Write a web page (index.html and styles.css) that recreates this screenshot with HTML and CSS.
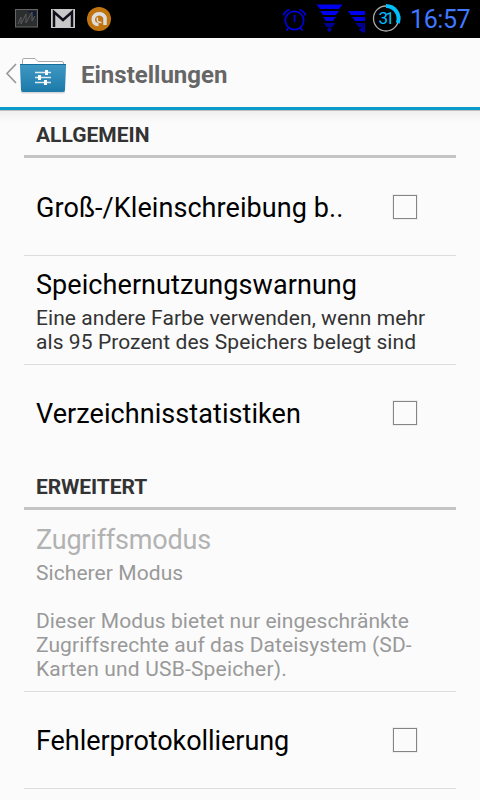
FILE: index.html
```html
<!DOCTYPE html>
<html lang="de">
<head>
<meta charset="utf-8">
<title>Einstellungen</title>
<link rel="stylesheet" href="styles.css">
</head>
<body>
<div class="status">
  <svg class="status-left" width="120" height="38" viewBox="0 0 120 38">
    <rect x="15.5" y="9.5" width="22" height="17.500" fill="#2b2e2e" stroke="#666"/>
    <path d="M28 11h8v8l-4-4z" fill="#141c35"/>
    <path d="M18 24l3-7v7l5-10v9l6-11v9l3-5" fill="none" stroke="#5a5a5a"/>
    <rect x="51" y="9" width="24" height="19" fill="#c8c8c8"/>
    <path d="M54 27V12l9 8 9-8v15" fill="none" stroke="#10101c" stroke-width="2.500"/>
    <circle cx="99" cy="19" r="12" fill="#c07410"/>
    <path d="M98.500 24.500C94 24.500 92.500 21 93.500 17.500c2-5 9.500-5 11.500 0v7.500" fill="none" stroke="#ddd" stroke-width="3.500"/>
    <path d="M97.500 17.500c-1 4 1 5 4 5" fill="none" stroke="#ddd" stroke-width="1.500"/>
  </svg>
  <svg class="status-icons" width="130" height="38" viewBox="275 0 130 38">
    <g fill="none" stroke="#0000e8" stroke-width="1.700">
      <circle cx="294.500" cy="20.500" r="9.200"/>
      <path d="M294.500 15v7M288.500 28l-2 2.500M300.500 28l2 2.500"/>
      <path d="M283.500 15.500q1-4 6-6M299.500 9.500q5 2 6 6"/>
    </g>
    <g fill="#0000f0">
      <path d="M316 4h27v1h-27z" fill="#000070"/>
      <path d="M317 5h25l-3 4h-19zM320 11h19l-3 4h-13z"/>
      <path d="M323 17h13l-3 4h-7z" fill="#0000e0"/>
      <path d="M323.500 23h12l-3 4h-6z" fill="#000090"/>
      <path d="M327 29.500l2.500-2.500 2.500 2.500-2.500 3z" fill="#0000a0"/>
      <path d="M348 11h17v4h-14z"/>
      <path d="M352 17h13v4h-10z" fill="#0000e0"/>
      <path d="M355.500 23h9.500v4h-6.500z" fill="#000090"/>
      <path d="M359 29.500l3-2.500h3v5.500h-3z" fill="#0000a0"/>
    </g>
    <circle cx="386" cy="18.500" r="12.500" fill="none" stroke="#aaa" stroke-width="1.300"/>
    <path d="M386 6a12.500 12.500 0 0 1 11.700 17" fill="none" stroke="#00bfff" stroke-width="4"/>
    <text class="battery" x="378.500" y="24" textLength="16">31</text>
  </svg>
  <span class="clock">16:57</span>
</div>
<header class="bar">
  <svg width="70" height="69" viewBox="0 38 70 69">
    <defs><linearGradient id="f" x2="0" y2="1"><stop stop-color="#4199c4"/><stop offset="1" stop-color="#1b79a9"/></linearGradient></defs>
    <path d="M16 64l-9 9.500 9 9.500" fill="none" stroke="#999" stroke-width="1.700"/>
    <rect x="21" y="90" width="44" height="3.500" rx="1.500" fill="#d8d8d8"/>
    <path d="M22.500 66v-6q0-1.500 1.500-1.500h11l3 3h24q1.500 0 1.500 1.500v4" fill="#fff" stroke="#aaa"/>
    <path d="M20 64h46v3l-1 23q0 2-2 2H23q-2 0-2-2l-1-23z" fill="url(#f)"/>
    <path d="M20 64.500h46" stroke="#176d99"/>
    <path d="M35 72.500h16M35 77.500h16M35 82.500h16" stroke="#dcebf2" stroke-width="1.500"/>
    <path d="M46.500 70v5M39.500 75v5M45.500 80v5" stroke="#fff" stroke-width="3"/>
  </svg>
  <h1 class="title">Einstellungen</h1>
</header>
<main class="list">
  <h2 class="section">ALLGEMEIN</h2>
  <div class="row check"><span class="name">Groß-/Kleinschreibung b..</span><i class="box"></i></div>
  <div class="row detail">
    <div class="name">Speichernutzungswarnung</div>
    <p class="summary">Eine andere Farbe verwenden, wenn mehr<br>als 95 Prozent des Speichers belegt sind</p>
  </div>
  <div class="row check"><span class="name">Verzeichnisstatistiken</span><i class="box"></i></div>
  <h2 class="section second">ERWEITERT</h2>
  <div class="row detail mode">
    <div class="name">Zugriffsmodus</div>
    <p class="summary">Sicherer Modus<br><br>Dieser Modus bietet nur eingeschränkte<br>Zugriffsrechte auf das Dateisystem (SD-<br><span class="wide">Karten und USB-Speicher).</span></p>
  </div>
  <div class="row check"><span class="name tight">Fehlerprotokollierung</span><i class="box"></i></div>
</main>
</body>
</html>
```
FILE: styles.css
```css
* { box-sizing: border-box; }
body { margin: 0; height: 800px; overflow: hidden; background: #fbfbfb; font-family: Roboto, sans-serif; color: #000; }
h1, h2, p { margin: 0; }
.status { display: flex; height: 38px; background: #000; }
.status-left { margin-right: 155px; }
.battery { font-size: 17px; fill: #00bfff; }
.clock { width: 75px; padding-left: 5px; font-size: 25px; line-height: 40px; letter-spacing: -.4px; color: #4078ff; white-space: nowrap; }
.bar { display: flex; height: 72px; border-bottom: 3px solid #0c99cc; }
.title { margin-left: 11px; font-size: 24px; line-height: 75px; height: 69px; font-weight: 700; color: #666; white-space: nowrap; }
.list { padding: 0 24px; background: linear-gradient(#bbb 0, #c4c4c4 1px, #eee 1px, #f5f5f5 6px, #fbfbfb 13px); }
.section { height: 48px; padding: 13px 12px 0; border-bottom: 3px solid #c5c5c5; font-size: 21px; line-height: 24px; font-weight: 700; color: #333; }
.second { height: 49px; padding-top: 14px; letter-spacing: -.1px; }
.row { border-bottom: 1px solid #dcdcdc; padding: 0 12px; }
.check { display: flex; justify-content: space-between; align-items: center; height: 98px; padding: 2px 39px 0 12px; }
.check:has(+ .second) { height: 96px; border-bottom: 0; }
.check:last-child { height: 97px; }
.name { font-size: 27px; line-height: 32px; letter-spacing: .07px; white-space: nowrap; }
.tight { letter-spacing: -.06px; }
.box { width: 24px; height: 24px; margin: -1px 0 1px; border: 1px solid #858585; outline: 1px solid #eee; }
.detail { height: 109px; padding-top: 13px; }
.summary { margin-top: 5px; font-size: 21px; line-height: 24px; letter-spacing: .07px; color: #333; white-space: nowrap; }
.mode { height: 182px; padding-top: 14px; }
.mode .name { letter-spacing: -.2px; color: #b2b2b2; }
.mode .summary { color: #999; }
.wide { letter-spacing: .18px; }
```
